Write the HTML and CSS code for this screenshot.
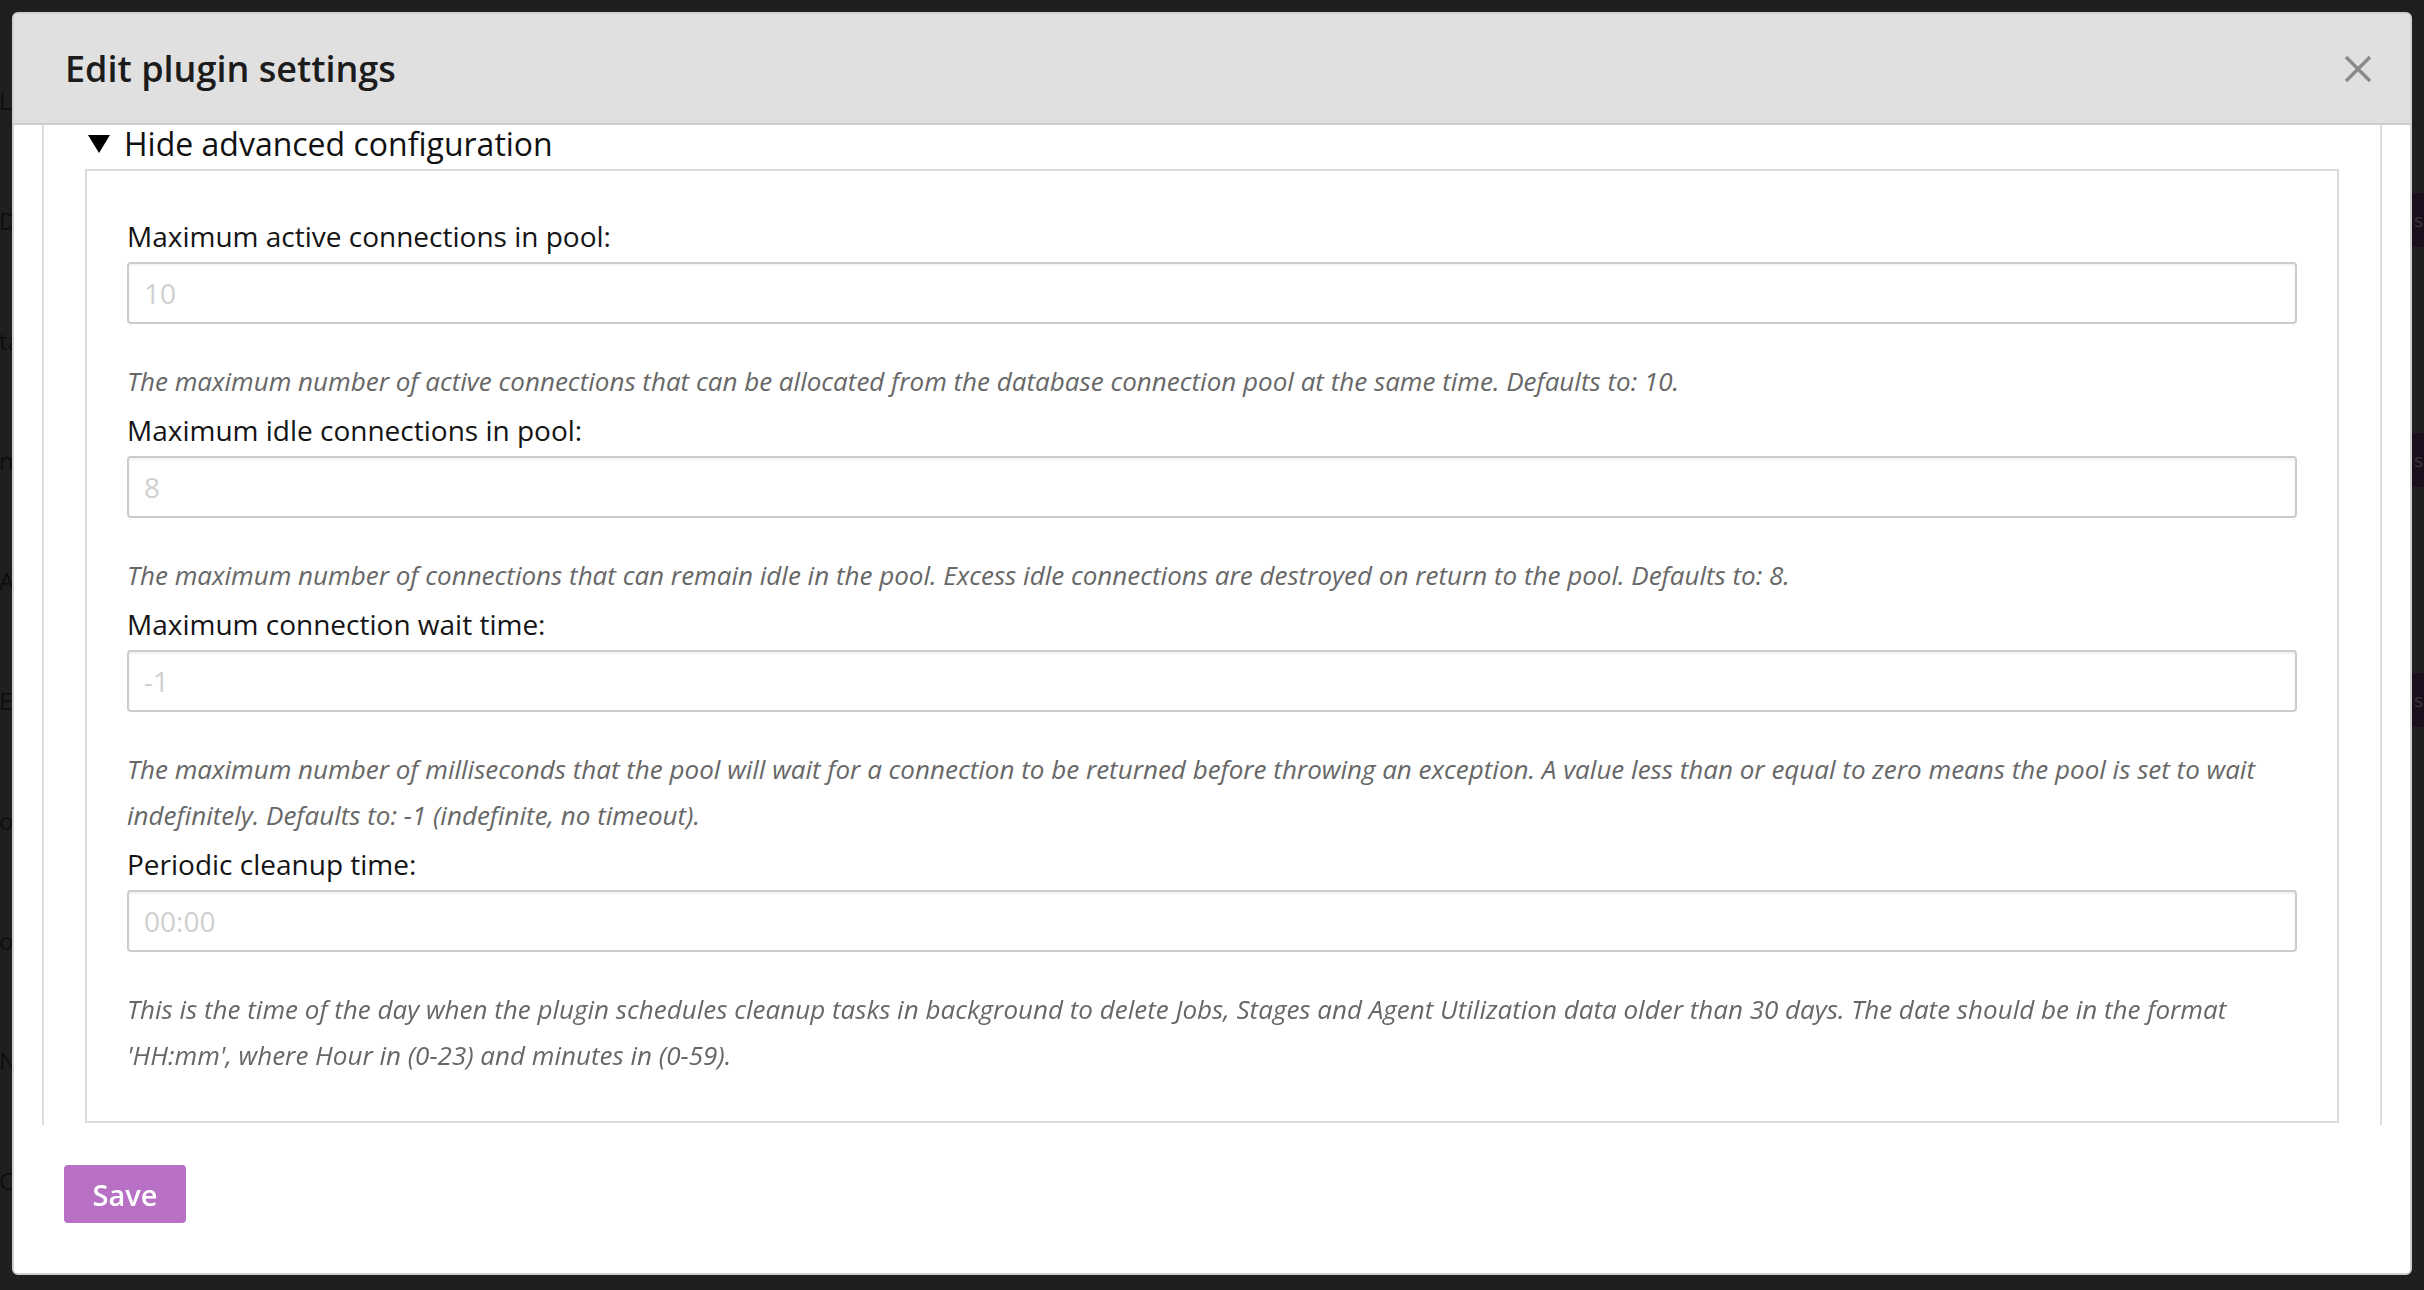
FILE: index.html
```html
<!DOCTYPE html>
<html lang="en">
<head>
<meta charset="utf-8">
<title>Edit plugin settings</title>
<link rel="stylesheet" href="styles.css">
</head>
<body>
<div class="page">
  <div class="page-row"><span class="page-text">Last run</span></div>
  <div class="page-row"><span class="page-text">Database</span><span class="page-btn">s</span></div>
  <div class="page-row"><span class="page-text">task</span></div>
  <div class="page-row"><span class="page-text">name</span><span class="page-btn">s</span></div>
  <div class="page-row"><span class="page-text">Agents</span></div>
  <div class="page-row"><span class="page-text">Elastic</span><span class="page-btn">s</span></div>
  <div class="page-row"><span class="page-text">over</span></div>
  <div class="page-row"><span class="page-text">over</span></div>
  <div class="page-row"><span class="page-text">Notes</span></div>
  <div class="page-row"><span class="page-text">Config</span></div>
</div>

<div class="modal">
  <div class="modal-header">
    <h2 class="modal-title">Edit plugin settings</h2>
    <button class="close" type="button" aria-label="Close">
      <svg width="28" height="28" viewBox="0 0 28 28"><path d="M2 2 L26 26 M26 2 L2 26" stroke="#8a8a8a" stroke-width="3.4" fill="none"/></svg>
    </button>
  </div>
  <div class="modal-body">
    <div class="advanced">
      <div class="summary">
        <svg class="caret" width="22" height="18" viewBox="0 0 22 18"><polygon points="0,0 22,0 11,18" fill="#000"/></svg>
        <span>Hide advanced configuration</span>
      </div>
      <fieldset class="fields">
        <div class="field">
          <label class="label">Maximum active connections in pool:</label>
          <input class="input" type="text" placeholder="10">
          <p class="help">The maximum number of active connections that can be allocated from the database connection pool at the same time. Defaults to: 10.</p>
        </div>
        <div class="field">
          <label class="label">Maximum idle connections in pool:</label>
          <input class="input" type="text" placeholder="8">
          <p class="help">The maximum number of connections that can remain idle in the pool. Excess idle connections are destroyed on return to the pool. Defaults to: 8.</p>
        </div>
        <div class="field">
          <label class="label">Maximum connection wait time:</label>
          <input class="input" type="text" placeholder="-1">
          <p class="help">The maximum number of milliseconds that the pool will wait for a connection to be returned before throwing an exception. A value less than or equal to zero means the pool is set to wait indefinitely. Defaults to: -1 (indefinite, no timeout).</p>
        </div>
        <div class="field">
          <label class="label">Periodic cleanup time:</label>
          <input class="input" type="text" placeholder="00:00">
          <p class="help">This is the time of the day when the plugin schedules cleanup tasks in background to delete Jobs, Stages and Agent Utilization data older than 30 days. The date should be in the format 'HH:mm', where Hour in (0-23) and minutes in (0-59).</p>
        </div>
      </fieldset>
    </div>
  </div>
  <div class="modal-footer">
    <button class="save" type="button">Save</button>
  </div>
</div>
</body>
</html>
```

FILE: styles.css
```css
html, body {
  margin: 0;
  padding: 0;
}
body {
  width: 2424px;
  height: 1290px;
  overflow: hidden;
  background: #1f1f1f;
  font-family: "Open Sans", "Noto Sans", sans-serif;
}

/* dimmed page behind the overlay */
.page {
  padding-top: 40px;
}
.page-row {
  height: 120px;
  display: flex;
  align-items: center;
  justify-content: space-between;
}
.page-text {
  color: #0e0e0e;
  font-size: 24px;
  margin-left: -1px;
}
.page-btn {
  box-sizing: border-box;
  width: 12px;
  height: 54px;
  padding-left: 2px;
  display: flex;
  align-items: center;
  background: #1b0f1f;
  color: #3a3a3a;
  font-size: 19px;
}

/* modal */
.modal {
  position: fixed;
  left: 12px;
  top: 12px;
  width: 2400px;
  height: 1263px;
  box-sizing: border-box;
  border: 2px solid #cfcfcf;
  border-radius: 6px;
  background: #fff;
  overflow: hidden;
  display: flex;
  flex-direction: column;
}
.modal-header {
  flex: none;
  height: 109px;
  background: #e0e0e0;
  border-bottom: 2px solid #cdcdcd;
  display: flex;
  align-items: center;
  justify-content: space-between;
  padding: 0 38px 0 51px;
}
.modal-title {
  margin: 0;
  font-size: 36px;
  font-weight: 600;
  color: #1c1c1c;
}
.close {
  border: 0;
  background: transparent;
  padding: 0;
  width: 28px;
  height: 28px;
  display: flex;
}

.modal-body {
  flex: none;
  height: 1000px;
  margin: 0 28px;
  border-left: 2px solid #dcdcdc;
  border-right: 2px solid #dcdcdc;
  padding: 0 41px;
}
.summary {
  display: flex;
  align-items: center;
  gap: 14px;
  padding-left: 3px;
  font-size: 32px;
  line-height: 37px;
  color: #111;
  margin: 0 0 7px;
}
.caret {
  flex: none;
}
.fields {
  margin: 0;
  border: 2px solid #dcdcdc;
  padding: 47px 40px 43px;
  min-width: 0;
}
.field + .field {
  margin-top: 8px;
}
.label {
  display: block;
  font-size: 28px;
  line-height: 36px;
  color: #141414;
  margin-bottom: 8px;
}
.input {
  display: block;
  width: 100%;
  height: 62px;
  box-sizing: border-box;
  border: 2px solid #cccccc;
  border-radius: 4px;
  box-shadow: inset 0 2px 2px rgba(0, 0, 0, 0.05);
  padding: 0 15px;
  font-family: "Open Sans", sans-serif;
  font-size: 28px;
  color: #333;
  background: #fff;
}
.input::placeholder {
  color: #cfcfcf;
}
.help {
  margin: 34px 0 0;
  font-style: italic;
  font-size: 26px;
  line-height: 46px;
  color: #676767;
}

.modal-footer {
  flex: none;
  padding: 40px 0 0 50px;
}
.save {
  width: 122px;
  height: 58px;
  border: 0;
  border-radius: 4px;
  background: #b770c4;
  color: #fff;
  font-family: "Open Sans", sans-serif;
  font-size: 29px;
  font-weight: 600;
  padding: 0;
}
```
